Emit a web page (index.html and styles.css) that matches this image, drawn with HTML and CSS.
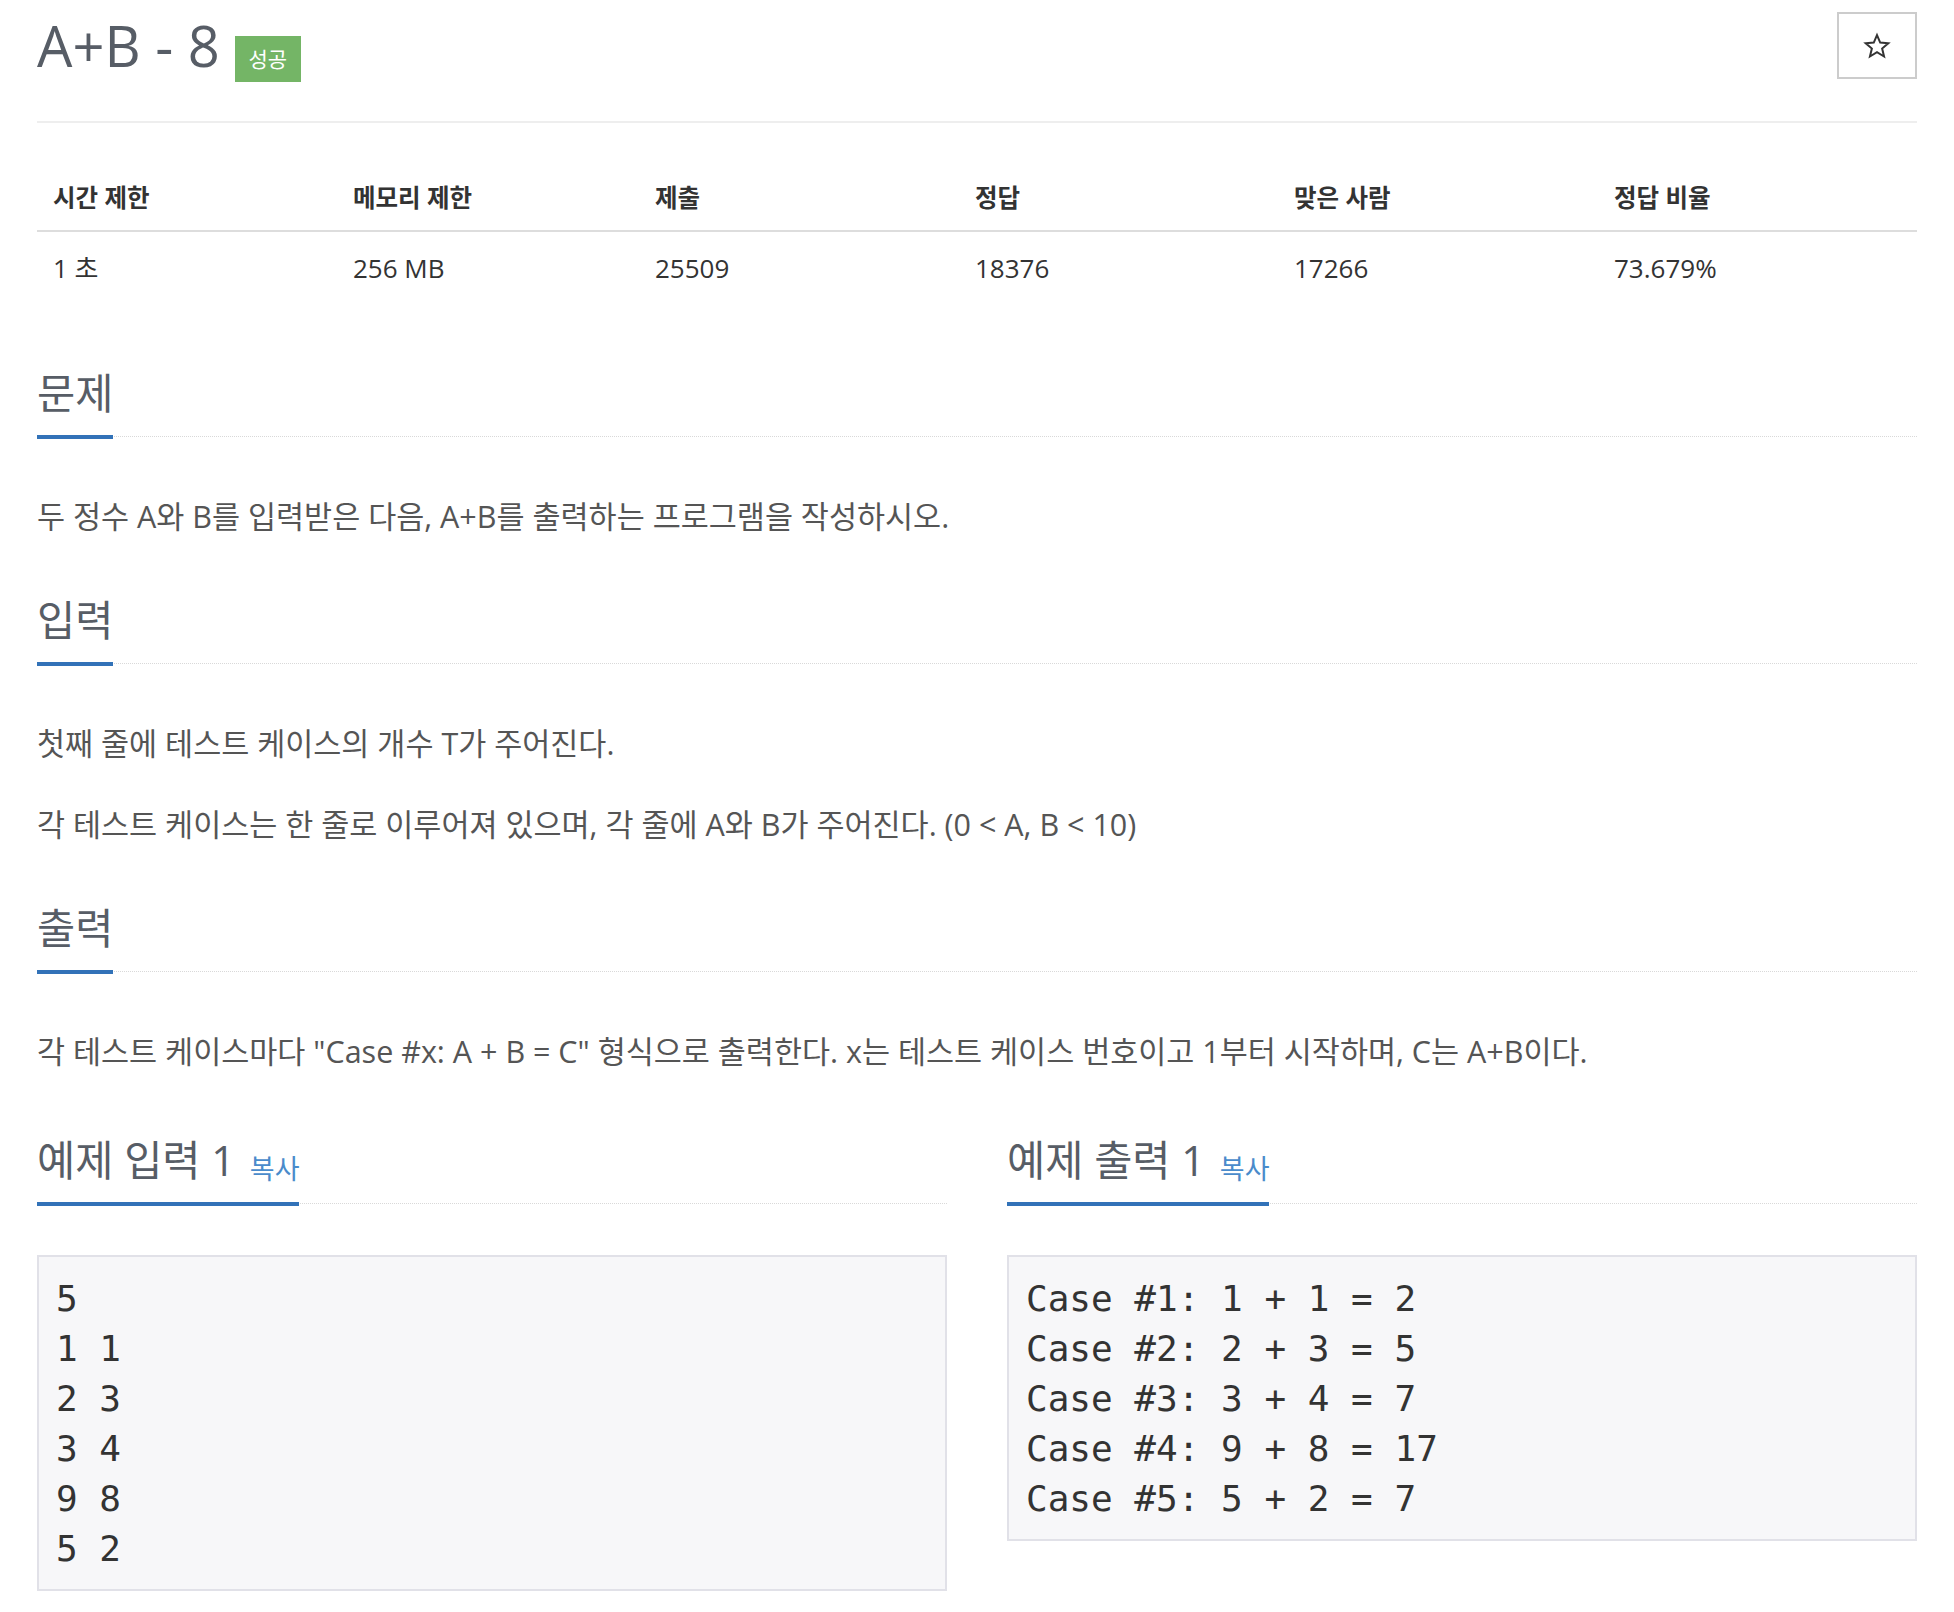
FILE: index.html
```html
<!DOCTYPE html>
<html lang="ko">
<head>
<meta charset="utf-8">
<title>A+B - 8</title>
<link rel="stylesheet" href="styles.css">
</head>
<body>
<div class="page">
  <header class="page-header">
    <div class="title-group">
      <h1 class="title">A+B - 8</h1>
      <span class="badge">성공</span>
    </div>
    <button class="star-btn" type="button" aria-label="즐겨찾기">
      <svg width="30" height="28" viewBox="0 0 24 24" aria-hidden="true"><path d="M12 2.6l2.75 6.45 6.95.55-5.3 4.55 1.65 6.85L12 17.3l-6.05 3.7 1.65-6.85-5.3-4.55 6.95-.55z" fill="none" stroke="#333" stroke-width="1.7" stroke-linejoin="miter"/></svg>
    </button>
  </header>

  <table class="info">
    <colgroup>
      <col class="c1"><col class="c2"><col class="c3"><col class="c4"><col class="c5"><col>
    </colgroup>
    <thead>
      <tr><th>시간 제한</th><th>메모리 제한</th><th>제출</th><th>정답</th><th>맞은 사람</th><th>정답 비율</th></tr>
    </thead>
    <tbody>
      <tr><td>1 초</td><td>256 MB</td><td>25509</td><td>18376</td><td>17266</td><td>73.679%</td></tr>
    </tbody>
  </table>

  <section class="section">
    <div class="headline"><h2>문제</h2></div>
    <p>두 정수 A와 B를 입력받은 다음, A+B를 출력하는 프로그램을 작성하시오.</p>
  </section>

  <section class="section">
    <div class="headline"><h2>입력</h2></div>
    <p>첫째 줄에 테스트 케이스의 개수 T가 주어진다.</p>
    <p>각 테스트 케이스는 한 줄로 이루어져 있으며, 각 줄에 A와 B가 주어진다. (0 &lt; A, B &lt; 10)</p>
  </section>

  <section class="section">
    <div class="headline"><h2>출력</h2></div>
    <p>각 테스트 케이스마다 "Case #x: A + B = C" 형식으로 출력한다. x는 테스트 케이스 번호이고 1부터 시작하며, C는 A+B이다.</p>
  </section>

  <div class="samples">
    <section class="sample">
      <div class="headline sample-headline"><h2>예제 입력 1 <a class="copy" href="#">복사</a></h2></div>
      <pre class="sampledata">5
1 1
2 3
3 4
9 8
5 2</pre>
    </section>
    <section class="sample">
      <div class="headline sample-headline"><h2>예제 출력 1 <a class="copy" href="#">복사</a></h2></div>
      <pre class="sampledata">Case #1: 1 + 1 = 2
Case #2: 2 + 3 = 5
Case #3: 3 + 4 = 7
Case #4: 9 + 8 = 17
Case #5: 5 + 2 = 7</pre>
    </section>
  </div>
</div>
</body>
</html>
```
FILE: styles.css
```css
html, body {
  margin: 0;
  padding: 0;
  background: #fff;
}

.page {
  padding: 0 37px 40px;
  font-family: "Open Sans", "Noto Sans CJK KR", sans-serif;
  color: #555;
}

.page-header {
  display: flex;
  justify-content: space-between;
  align-items: flex-start;
  padding: 12px 0 39px;
  border-bottom: 2px solid #eee;
}

.title-group {
  display: flex;
  align-items: flex-start;
}

.title {
  margin: 0;
  font-size: 56px;
  line-height: 67px;
  font-weight: 400;
  color: #575d66;
}

.badge {
  display: flex;
  align-items: center;
  justify-content: center;
  width: 66px;
  height: 46px;
  margin: 24px 0 0 15px;
  background: #74b566;
  color: #fff;
  font-size: 21px;
  line-height: 1;
}

.star-btn {
  display: flex;
  align-items: center;
  justify-content: center;
  width: 80px;
  height: 67px;
  padding: 0;
  background: #fff;
  border: 2px solid #ccc;
  border-radius: 0;
}

.info {
  width: 100%;
  table-layout: fixed;
  border-collapse: collapse;
  margin: 43px 0 69px;
  color: #333;
}

.info .c1 { width: 300px; }
.info .c2 { width: 302px; }
.info .c3 { width: 320px; }
.info .c4 { width: 319px; }
.info .c5 { width: 320px; }

.info th {
  text-align: left;
  font-size: 24.5px;
  font-weight: 700;
  line-height: 32px;
  padding: 16px 16px 16px;
  border-bottom: 2px solid #ddd;
}

.info td {
  font-size: 26px;
  line-height: 32px;
  padding: 20px 16px 16px;
}

.section {
  padding-bottom: 21px;
}

.headline {
  display: flex;
  border-bottom: 1px dotted #d9d9d9;
  margin-bottom: 57px;
}

.headline h2 {
  margin: 0 0 -3px;
  padding: 0 0 18px;
  font-size: 41.5px;
  line-height: 48px;
  font-weight: 400;
  color: #575d66;
  border-bottom: 4px solid #3272b8;
}

.section p {
  margin: 0 0 37px;
  font-size: 30.5px;
  line-height: 44px;
  color: #555;
}

.samples {
  display: grid;
  grid-template-columns: 1fr 1fr;
  column-gap: 60px;
  margin-top: 5px;
  align-items: start;
}

.sample-headline {
  margin-bottom: 50.5px;
}

.copy {
  margin-left: 4px;
  font-size: 27px;
  line-height: 1;
  color: #4a8bcb;
  text-decoration: none;
  vertical-align: -3px;
}

.sampledata {
  margin: 0;
  padding: 17.5px 17px 15px;
  background: #f7f7f9;
  border: 2px solid #e1e1e8;
  font-family: "DejaVu Sans Mono", monospace;
  font-size: 36px;
  line-height: 50px;
  color: #333;
}
```
